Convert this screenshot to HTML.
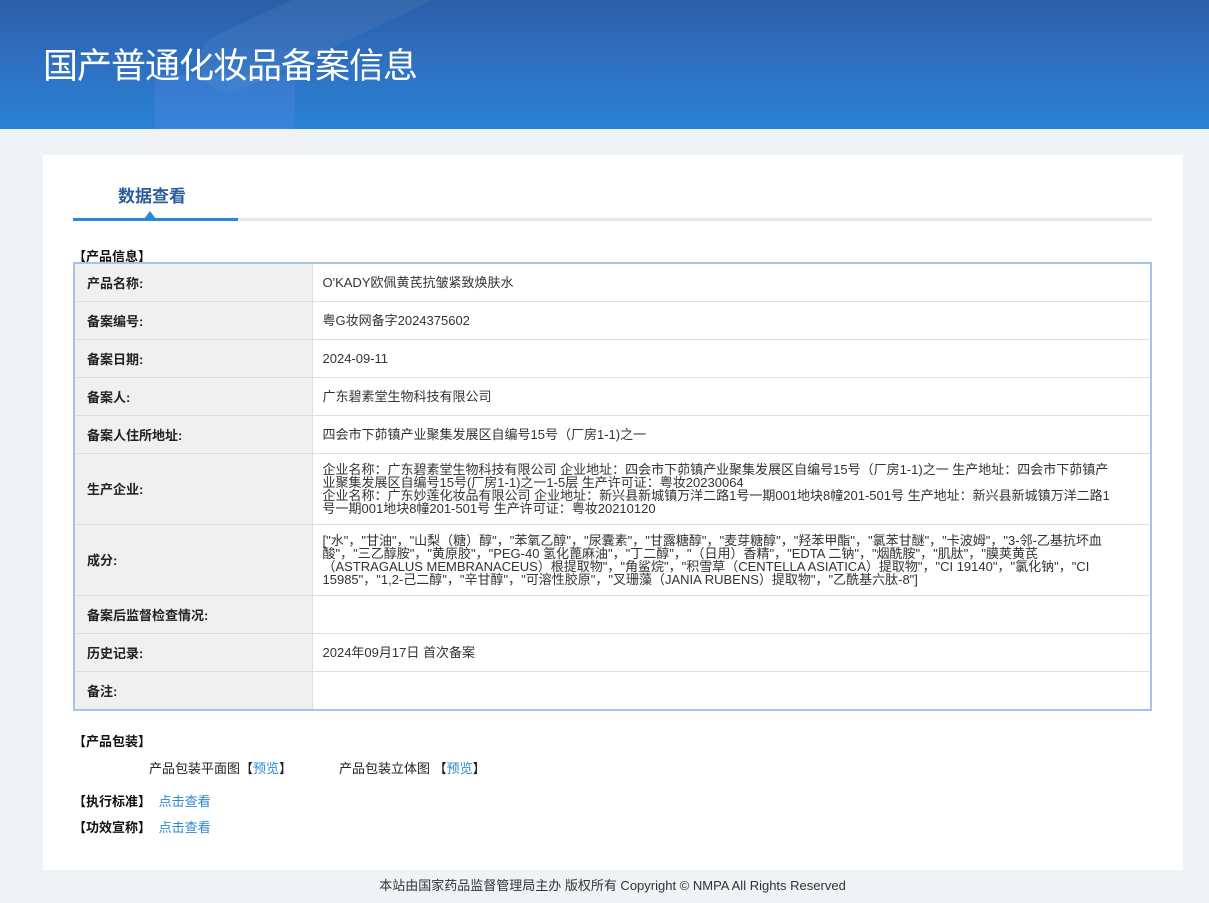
<!DOCTYPE html>
<html><head><meta charset="utf-8"><style>
*{margin:0;padding:0;box-sizing:border-box}
body{width:1209px;height:903px;background:#eff3f6;font-family:"Liberation Sans","Noto Sans CJK SC",sans-serif;font-size:13px;color:#333;position:relative;overflow:hidden}
.hd{position:absolute;left:0;top:0;width:1209px;height:129px;background:linear-gradient(180deg,#2c5ea8 0%,#2e72c4 55%,#2a82d4 100%);overflow:hidden}
.hd .c1{position:absolute;left:190px;top:-10px;width:260px;height:60px;border-radius:30px;background:rgba(255,255,255,.05);transform:rotate(-25deg)}
.hd .c2{position:absolute;left:155px;top:75px;width:140px;height:60px;background:rgba(90,140,230,.25)}
.hd h1{position:absolute;left:43px;top:38px;color:#fff;font-size:35px;font-weight:normal;letter-spacing:-1px}
.card{position:absolute;left:43px;top:155px;width:1140px;height:715px;background:#fff}
.tab{position:absolute;left:73px;top:182px;width:158px;text-align:center;color:#2d5c9c;font-weight:bold;font-size:17px}
.line{position:absolute;left:73px;top:218px;width:1079px;height:3px;background:#e8e8e8}
.line2{position:absolute;left:73px;top:218px;width:165px;height:3px;background:#2b87d8}
.tri{position:absolute;left:144px;top:211px;width:0;height:0;border-left:6px solid transparent;border-right:6px solid transparent;border-bottom:8px solid #2b87d8}
.sec{position:absolute;left:73px;font-weight:bold;color:#111}
table{position:absolute;left:73px;top:262px;width:1079px;border-collapse:collapse;border:2px solid #a9c3e8}
td{border:1px solid #dedede;vertical-align:middle}
td.l{width:238px;background:#f0f0f0;font-weight:bold;padding-left:12px;color:#222}
td.v{padding:0 40px 0 10px;line-height:13px;color:#333}
td.v.s{line-height:13px}
a{color:#2b87d8;text-decoration:none}
.ft{position:absolute;left:0;width:1225px;top:875px;text-align:center;color:#333}
</style></head><body>
<div class="hd"><div class="c1"></div><div class="c2"></div><h1>国产普通化妆品备案信息</h1></div>
<div class="card"></div>
<div class="tab">数据查看</div>
<div class="line"></div><div class="line2"></div><div class="tri"></div>
<div class="sec" style="top:246px">【产品信息】</div>
<table>
<tr style="height:38px"><td class="l">产品名称:</td><td class="v s">O'KADY欧佩黄芪抗皱紧致焕肤水</td></tr>
<tr style="height:38px"><td class="l">备案编号:</td><td class="v s">粤G妆网备字2024375602</td></tr>
<tr style="height:38px"><td class="l">备案日期:</td><td class="v s">2024-09-11</td></tr>
<tr style="height:38px"><td class="l">备案人:</td><td class="v s">广东碧素堂生物科技有限公司</td></tr>
<tr style="height:38px"><td class="l">备案人住所地址:</td><td class="v s">四会市下茆镇产业聚集发展区自编号15号（厂房1-1)之一</td></tr>
<tr style="height:71px"><td class="l">生产企业:</td><td class="v">企业名称：广东碧素堂生物科技有限公司 企业地址：四会市下茆镇产业聚集发展区自编号15号（厂房1-1)之一 生产地址：四会市下茆镇产业聚集发展区自编号15号(厂房1-1)之一1-5层 生产许可证：粤妆20230064<br>企业名称：广东妙莲化妆品有限公司 企业地址：新兴县新城镇万洋二路1号一期001地块8幢201-501号 生产地址：新兴县新城镇万洋二路1号一期001地块8幢201-501号 生产许可证：粤妆20210120</td></tr>
<tr style="height:71px"><td class="l">成分:</td><td class="v">["水"，"甘油"，"山梨（糖）醇"，"苯氧乙醇"，"尿囊素"，"甘露糖醇"，"麦芽糖醇"，"羟苯甲酯"，"氯苯甘醚"，"卡波姆"，"3-邻-乙基抗坏血酸"，"三乙醇胺"，"黄原胶"，"PEG-40 氢化蓖麻油"，"丁二醇"，"（日用）香精"，"EDTA 二钠"，"烟酰胺"，"肌肽"，"膜荚黄芪（ASTRAGALUS MEMBRANACEUS）根提取物"，"角鲨烷"，"积雪草（CENTELLA ASIATICA）提取物"，"CI 19140"，"氯化钠"，"CI 15985"，"1,2-己二醇"，"辛甘醇"，"可溶性胶原"，"叉珊藻（JANIA RUBENS）提取物"，"乙酰基六肽-8"]</td></tr>
<tr style="height:38px"><td class="l">备案后监督检查情况:</td><td class="v s"></td></tr>
<tr style="height:38px"><td class="l">历史记录:</td><td class="v s">2024年09月17日 首次备案</td></tr>
<tr style="height:39px"><td class="l">备注:</td><td class="v s"></td></tr>
</table>
<div class="sec" style="top:731px">【产品包装】</div>
<div style="position:absolute;left:149px;top:758px;color:#222">产品包装平面图【<a>预览</a>】</div>
<div style="position:absolute;left:339px;top:758px;color:#222">产品包装立体图 【<a>预览</a>】</div>
<div class="sec" style="top:791px">【执行标准】 <a style="font-weight:normal;margin-left:4px">点击查看</a></div>
<div class="sec" style="top:817px">【功效宣称】 <a style="font-weight:normal;margin-left:4px">点击查看</a></div>
<div class="ft">本站由国家药品监督管理局主办 版权所有 Copyright © NMPA All Rights Reserved</div>
</body></html>
